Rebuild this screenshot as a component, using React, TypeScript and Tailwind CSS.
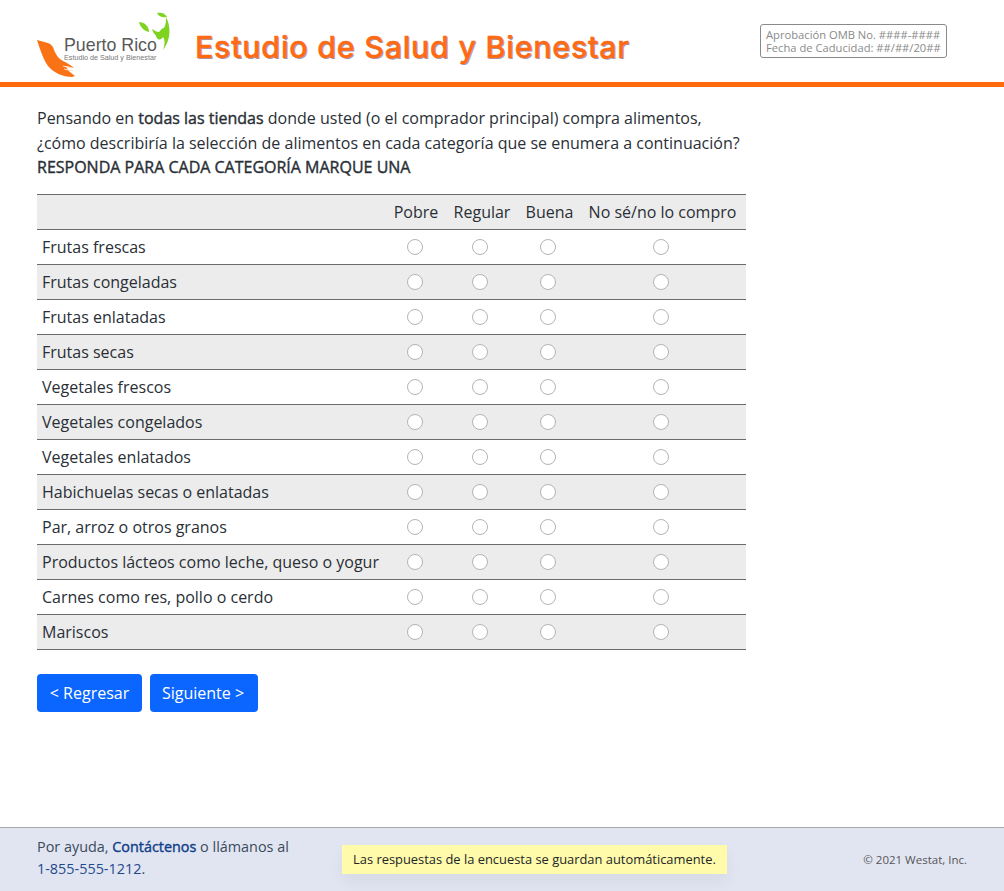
const rows = [
  "Frutas frescas",
  "Frutas congeladas",
  "Frutas enlatadas",
  "Frutas secas",
  "Vegetales frescos",
  "Vegetales congelados",
  "Vegetales enlatados",
  "Habichuelas secas o enlatadas",
  "Par, arroz o otros granos",
  "Productos lácteos como leche, queso o yogur",
  "Carnes como res, pollo o cerdo",
  "Mariscos",
];

const gridCols = "grid grid-cols-[349px_58px_72px_64px_162px]";

function Logo() {
  return (
    <div className="relative w-[134px] h-[70px] ml-[37px] mt-[12px] shrink-0">
      <svg width="134" height="70" viewBox="37 12 134 70" className="absolute left-0 top-0 blur-[0.4px]">
        <path d="M37 40 L48 43 C51 44 53 46 54 50 C56 55 59 59 63 61 C67 63 71 65 74 68 L66 66 C67 70 71 73 75 76 L72 77 C63 77 54 73 48 66 C43 59 40 49 37 40 Z" fill="#f97316" />
        <path d="M63 66 L72 68 M64 69 L73 71" stroke="#ffe0c4" strokeWidth="1" />
        <path d="M157 13 C161 12 165 13 167 17 C163 18 159 17 157 13 Z" fill="#7ed321" />
        <path d="M139 22 C144 22 149 26 149 32 C144 31 140 27 139 22 Z" fill="#7ed321" />
        <path d="M166 17 C171 26 171 40 163 50 C165 44 165 40 163 37 C160 41 157 40 156 36 C155 34 153 33 152 29 C155 31 157 32 159 32 C161 30 162 28 164 28 C166 25 166 21 166 17 Z" fill="#7ed321" />
      </svg>
      <span className="absolute left-[27px] top-[23px] text-[17.8px] leading-[20px] text-[#5a5a5a] font-['Liberation_Sans',sans-serif] whitespace-nowrap">Puerto Rico</span>
      <span className="absolute left-[27px] top-[41px] text-[7.2px] leading-[10px] text-[#777] font-['Liberation_Sans',sans-serif] whitespace-nowrap">Estudio de Salud y Bienestar</span>
    </div>
  );
}

function Radio() {
  return (
    <div className="flex items-center justify-center">
      <input type="radio" name="x" className="appearance-none w-4 h-4 rounded-full border border-[#b4b4b4] bg-white block" />
    </div>
  );
}

export default function App() {
  return (
    <div className="min-h-[891px] h-[891px] flex flex-col bg-white text-[#2a2f36] font-['Open_Sans',sans-serif] text-base overflow-hidden">
      <header className="h-[87px] shrink-0 border-b-[5px] border-[#ff6a0d] flex items-start">
        <Logo />
        <h1 className="ml-[24px] mt-[27px] text-[30.5px] leading-[40px] font-medium text-[#ff6a13] font-['Inter',sans-serif] tracking-[0.7px] whitespace-nowrap [-webkit-text-stroke:0.5px_#ff6a13] [text-shadow:1px_0.5px_0.5px_#8fa0c8]">
          Estudio de Salud y Bienestar
        </h1>
        <div className="ml-auto mr-[57px] mt-[24px] w-[187px] h-[34px] border border-[#8a8a8a] rounded-[3px] px-[5px] pt-[3px] text-[11.2px] leading-[13px] text-[#8a8a8a] whitespace-nowrap">
          <div>Aprobación OMB No. ####-####</div>
          <div>Fecha de Caducidad: ##/##/20##</div>
        </div>
      </header>

      <main className="flex-1 px-[37px] pt-[19px]">
        <div className="w-[709px] leading-[24.5px]">
          <p>
            Pensando en <b className="font-normal [-webkit-text-stroke:0.4px_#2a2f36]">todas las tiendas</b> donde usted (o el comprador principal) compra alimentos, ¿cómo describiría la selección de alimentos en cada categoría que se enumera a continuación?
          </p>
          <p className="font-normal [-webkit-text-stroke:0.4px_#2a2f36]">RESPONDA PARA CADA CATEGORÍA MARQUE UNA</p>
        </div>

        <div className="w-[709px] mt-[14px] border-t border-[#6b6b6b]">
          <div className={`${gridCols} h-[35px] items-center bg-[#ececec] border-b border-[#6b6b6b] text-center whitespace-nowrap`}>
            <div />
            <div className="pl-[2px]">Pobre</div>
            <div className="pl-[4px]">Regular</div>
            <div className="pl-[3px]">Buena</div>
            <div className="pl-[3px]">No sé/no lo compro</div>
          </div>
          {rows.map((r, i) => (
            <div key={r} className={`${gridCols} h-[35px] items-center border-b border-[#6b6b6b] whitespace-nowrap ${i % 2 === 1 ? "bg-[#ececec]" : "bg-white"}`}>
              <div className="pl-[5px]">{r}</div>
              <Radio />
              <Radio />
              <Radio />
              <Radio />
            </div>
          ))}
        </div>

        <div className="flex gap-2 mt-[24px]">
          <button className="h-[38px] w-[105px] rounded-[4px] bg-[#0b66ff] text-white">&lt; Regresar</button>
          <button className="h-[38px] w-[108px] rounded-[4px] bg-[#0b66ff] text-white pr-[2px]">Siguiente &gt;</button>
        </div>
      </main>

      <footer className="h-[64px] shrink-0 bg-[#e1e5f2] border-t border-[#a9a9a9] relative flex items-start">
        <div className="ml-[37px] mt-[8px] w-[270px] text-[14.4px] leading-[22px] text-[#3a4a5c]">
          Por ayuda, <a className="text-[#123f87] [-webkit-text-stroke:0.4px_#123f87]">Contáctenos</a> o llámanos al
          <br />
          <span className="text-[#1f4a8a]">1-855-555-1212</span>.
        </div>
        <div className="ml-[35px] mt-[17px] w-[385px] h-[29px] bg-[#fffbaa] flex items-center pl-[11px] text-[12.9px] text-[#212529] whitespace-nowrap shadow-[0_8px_16px_rgba(0,0,0,0.05)]">
          Las respuestas de la encuesta se guardan automáticamente.
        </div>
        <div className="ml-auto mr-[37px] mt-[24px] text-[11.5px] leading-[15px] text-[#555] whitespace-nowrap">© 2021 Westat, Inc.</div>
      </footer>
    </div>
  );
}
